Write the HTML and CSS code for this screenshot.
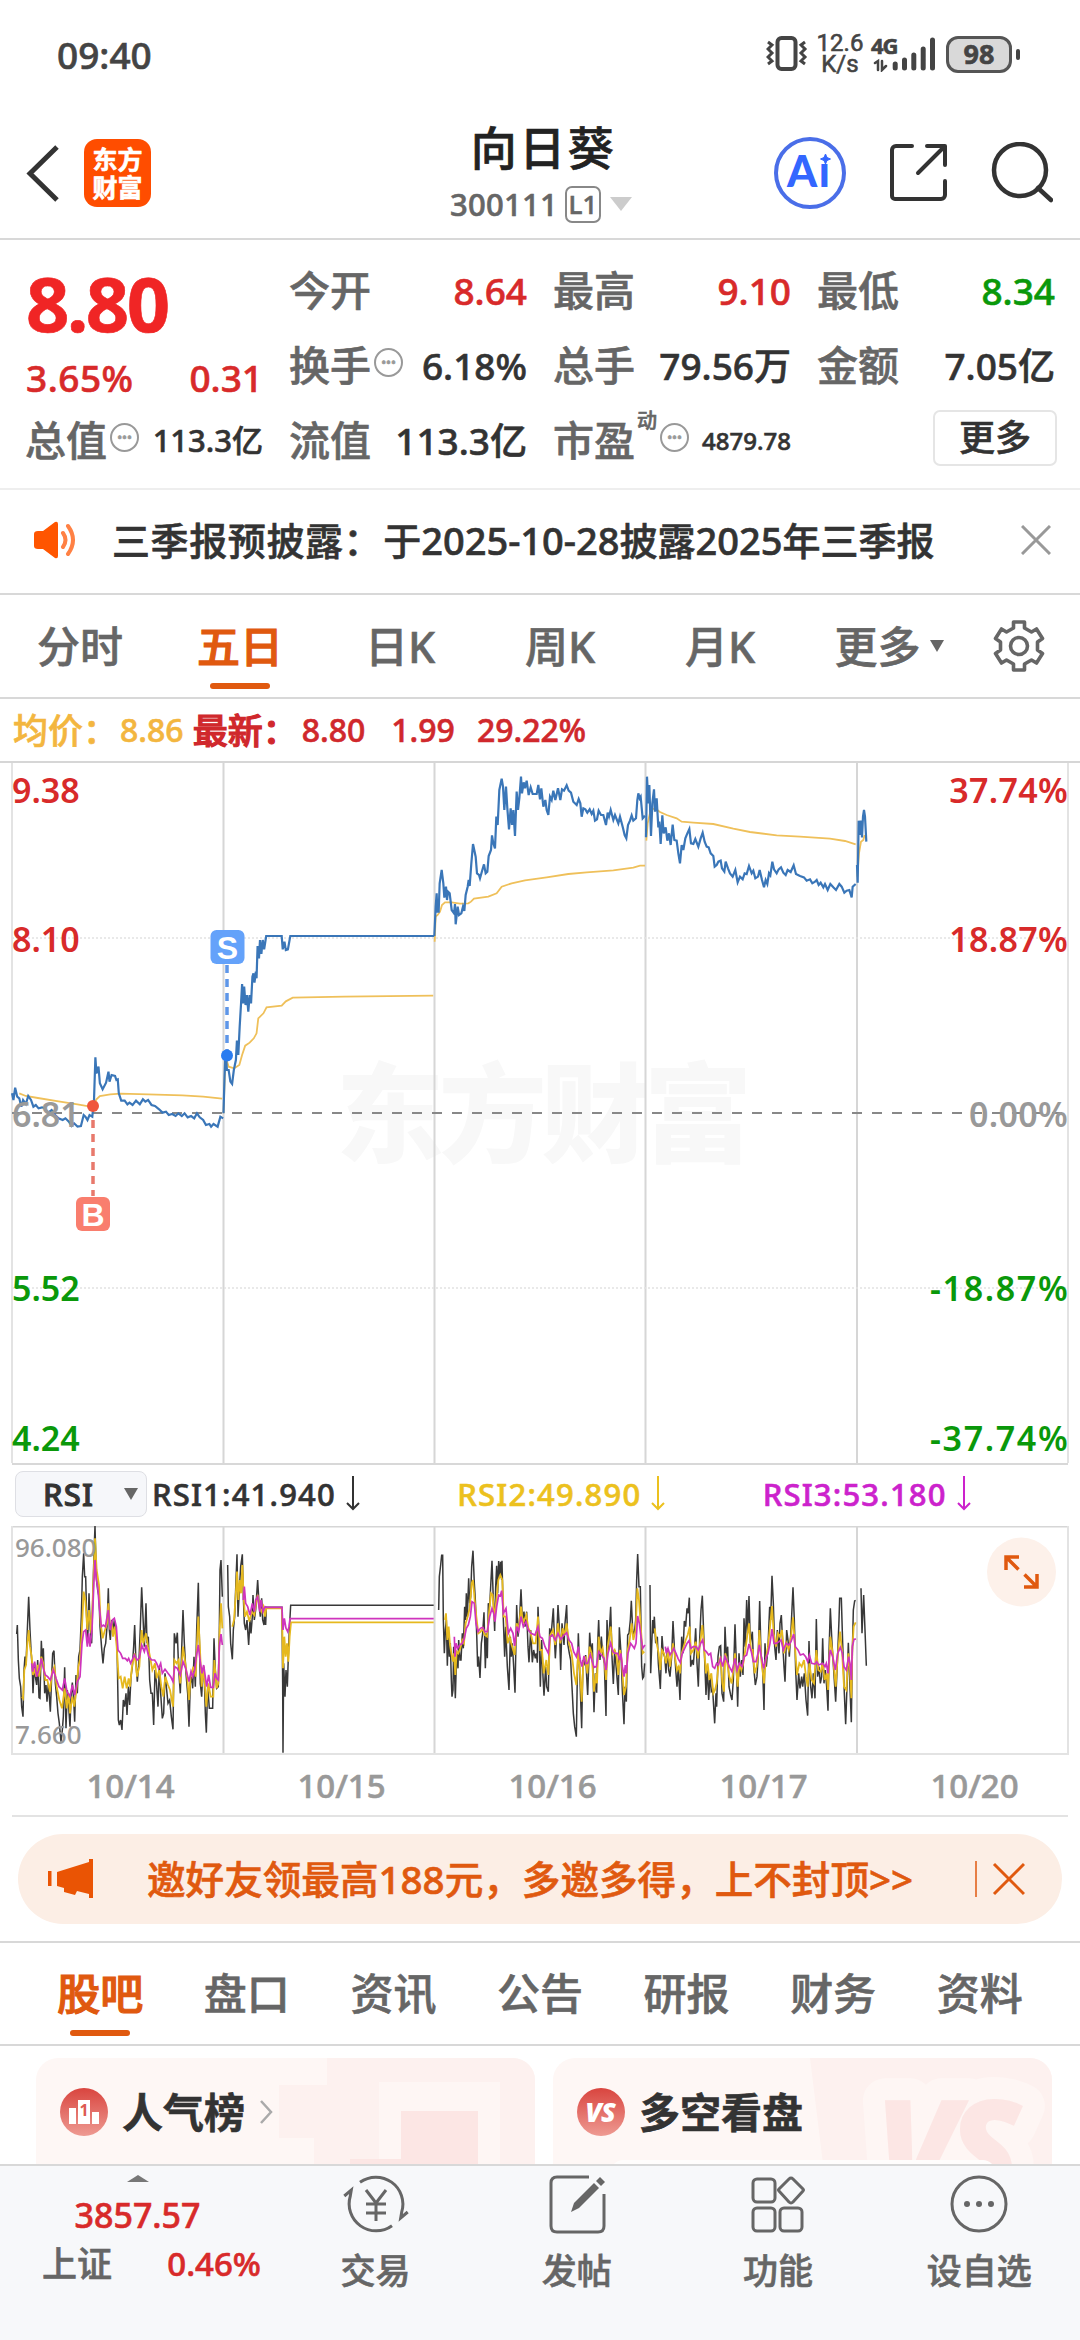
FILE: index.html
```html
<!DOCTYPE html>
<html lang="zh-CN">

<head>
  <meta charset="UTF-8" />
  <meta name="viewport" content="width=device-width, initial-scale=1.0" />
  <title>向日葵 300111</title>
  <link rel="stylesheet" href="styles.css">
</head>

<body>
  <!-- status bar -->
  <div class="status">
    <span class="time">09:40</span>
    <div class="status-right">
      <svg class="vibrate" width="42" height="36" viewBox="0 0 42 36" fill="none" stroke="#444" stroke-width="3">
        <rect x="11.500" y="2" width="18" height="31" rx="4" stroke-width="4" />
        <path d="M2 6l4 3-4 4 4 4-4 4 4 4-4 3M39 6l-4 3 4 4-4 4 4 4-4 4 4 3" />
      </svg>
      <div class="speed"><span>12.6</span><span>K/s</span></div>
      <div class="signal">
        <span>4G</span>
        <svg width="64" height="36" viewBox="0 0 64 36" stroke="#444" stroke-linecap="round" fill="none">
          <path d="M24.200 28v4M33.500 24v8M42.800 19v13M52.200 13v19M61.500 4v28" stroke-width="5" />
          <path d="M4 27l3-2v9M11 25v9l4-4" stroke-width="2.500" />
        </svg>
      </div>
      <div class="battery">98</div>
    </div>
  </div>

  <!-- header -->
  <div class="header">
    <svg class="back" width="36" height="60" viewBox="0 0 36 60" fill="none" stroke="#333" stroke-width="5">
      <path d="M32 4L5 30.500 32 57" />
    </svg>
    <div class="logo"><span>东方</span><span>财富</span></div>
    <div class="title">
      <h1>向日葵</h1>
      <div class="code">300111<span class="level">L1</span><i class="tri"></i></div>
    </div>
    <div class="header-icons">
      <svg width="72" height="72" viewBox="0 0 72 72">
        <circle cx="36" cy="36" r="34" fill="none" stroke="#4a6ee8" stroke-width="4" />
        <text class="ai" x="13" y="50" textLength="43">Ai</text>
        <circle cx="50.500" cy="19.500" r="7.500" fill="#fff" />
        <path d="M51.500 17l1.500 3.500 3.500 1.500-3.500 1.500-1.500 3.500-1.500-3.500-3.500-1.500 3.500-1.500z" fill="#3366ff" stroke="#3366ff" />
      </svg>
      <svg width="60" height="60" viewBox="0 0 60 60" fill="none" stroke="#333" stroke-width="4" stroke-linecap="round" stroke-linejoin="round">
        <path d="M23 3H7a4 4 0 0 0-4 4v46a3 3 0 0 0 3 3h46a4 4 0 0 0 4-4V38" />
        <path d="M38 3h18v19M55 4L29 30" />
      </svg>
      <svg width="62" height="62" viewBox="0 0 62 62" fill="none" stroke="#333" stroke-width="4.500" stroke-linecap="round">
        <circle cx="29" cy="28" r="26" />
        <path d="M47 46l13 12" />
      </svg>
    </div>
  </div>

  <!-- quote -->
  <div class="quote">
    <div class="price">
      <div class="last">8.80</div>
      <div class="change"><span>3.65%</span><span>0.31</span></div>
    </div>
    <div class="cell"><label>今开</label><b class="up">8.64</b></div>
    <div class="cell"><label>最高</label><b class="up">9.10</b></div>
    <div class="cell"><label>最低</label><b class="down">8.34</b></div>
    <div class="cell"><label>换手</label><i class="info">•••</i><b>6.18%</b></div>
    <div class="cell"><label>总手</label><b>79.56万</b></div>
    <div class="cell"><label>金额</label><b>7.05亿</b></div>
    <div class="cell"><label>总值</label><i class="info">•••</i><b class="small">113.3亿</b></div>
    <div class="cell"><label>流值</label><b>113.3亿</b></div>
    <div class="cell"><label>市盈</label><sup>动</sup><i class="info">•••</i><b class="tiny">4879.78</b></div>
    <div class="cell"><button>更多</button></div>
  </div>

  <!-- notice -->
  <div class="notice">
    <svg width="46" height="38" viewBox="0 0 46 38">
      <path d="M1 13q0-3 4-3h5L22 1q3-1 3 2v32q0 3-3 2L10 28H5q-4 0-4-3z" fill="#ff5500" />
      <path d="M30 12q5 7 0 14M35 5q10 14 0 28" fill="none" stroke="#ff8144" stroke-width="4" stroke-linecap="round" />
    </svg>
    <p><span>三季报预披露：</span>于2025-10-28披露2025年三季报</p>
    <svg width="30" height="30" viewBox="0 0 30 30" stroke="#999" stroke-width="3">
      <path d="M1 1l28 28M29 1L1 29" />
    </svg>
  </div>

  <!-- period tabs -->
  <div class="tabs">
    <span>分时</span>
    <span class="active">五日</span>
    <span>日K</span>
    <span>周K</span>
    <span>月K</span>
    <span class="more">更多<i class="tri"></i></span>
    <svg width="52" height="52" viewBox="0 0 52 52" fill="none" stroke="#666" stroke-width="3.600">
      <path d="M20.500 2h11v6l7 4 5-3 6 9.500-5 3.500v8l5 3.500-6 9.500-5-3-7 4v6h-11v-6l-7-4-5 3-6-9.500 5-3.500v-8l-5-3.500 6-9.500 5 3 7-4z" stroke-linejoin="round" />
      <circle cx="26" cy="26" r="8.500" />
    </svg>
  </div>

  <div class="legend">
    <span class="avg">均价：</span><span class="avg v1">8.86</span>
    <span class="red bold">最新：</span><span class="red v1">8.80</span>
    <span class="red v2">1.99</span>
    <span class="red">29.22%</span>
  </div>

  <!-- five day chart -->
  <svg class="chart" width="1080" height="702" viewBox="0 761 1080 702">
    <text class="mark" x="336" y="1154" textLength="416">东方财富</text>
    <path class="grid" d="M0 762H1080M223.500 763V1463M434.500 763V1463M645.500 763V1463M857 763V1463" />
    <path class="edge" d="M12 763V1463M1068 763V1463" />
    <path class="faint" d="M12 938H1068M12 1288H1068" />
    <path class="zero" d="M12 1113H1068" />

    <g class="avg-line" transform="translate(0 760) scale(.34437 .33333)">
      <polyline points="56,1000 75,1008 110,1014 170,1024 225,1033 262,1040 272,1035 280,1018 290,1008 320,1003 350,1001 430,1003 530,1006 590,1010 645,1016" />
      <polyline points="649,1060 653,940 658,900 664,920 680,925 695,915 703,885 712,857 725,848 737,835 745,820 750,775 765,760 774,742 818,737 830,724 850,713 1000,710 1258,707" />
    </g>
    <g class="avg-line" transform="translate(400 750) scale(.33333)">
      <polyline points="104,575 107,500 113,495 120,485 126,465 135,457 155,457 180,461 205,460 213,455 222,446 265,440 290,430 305,410 335,400 375,391 440,382 505,372 560,367 640,361 700,353 720,347 735,347" />
      <polyline points="739,272 743,220 752,180 765,175 780,186 800,195 830,205 845,215 880,218 940,222 1000,236 1050,246 1130,256 1200,260 1290,266 1335,273 1367,283" />
      <polyline points="1372,380 1377,310 1383,275 1390,270 1394,255" />
    </g>
    <g class="price-line" transform="translate(0 760) scale(.34437 .33333)">
      <polyline points="35,1000 39,1020 44,983 50,1010 56,1015 62,1040 67,1020 75,1032 82,1008 90,1020 97,1040 104,1035 112,1045 122,1042 130,1045 140,1058 150,1050 160,1065 170,1075 182,1080 190,1075 200,1085 208,1098 215,1090 225,1100 235,1098 243,1065 248,1070 254,1080 260,1065 268,1070 273,1020 277,892 280,940 286,920 290,970 298,988 308,968 315,935 318,965 324,945 334,948 338,960 342,958 345,1000 352,1022 362,1022 370,1033 376,1028 385,1035 395,1022 406,1033 415,1018 422,1025 430,1020 440,1035 450,1038 462,1048 472,1058 482,1055 490,1065 500,1062 510,1068 518,1060 528,1068 536,1060 545,1072 555,1068 564,1075 572,1060 580,1072 590,1080 598,1095 608,1092 613,1100 620,1092 632,1100 640,1070 648,1075" />
      <polyline points="649,1060 652,950 655,870 659,930 664,930 669,965 674,972 679,930 685,900 688,842 692,885 696,800 700,730 703,672 706,730 709,680 713,735 717,705 721,755 725,705 729,730 733,650 736,640 739,668 743,635 745,655 748,558 752,595 755,540 759,582 763,540 767,568 773,528 818,528 821,568 826,545 830,570 836,568 843,528 1261,528" />
    </g>
    <g class="price-line" transform="translate(400 750) scale(.33333)">
      <polyline points="103,558 107,470 110,430 112,485 116,485 119,400 125,360 130,400 133,443 138,410 141,450 144,425 149,430 155,480 162,490 165,462 167,523 173,470 177,495 184,490 189,470 193,483 197,435 203,410 206,390 209,408 214,340 219,282 227,320 231,370 237,375 240,385 247,360 252,343 257,370 262,365 266,318 273,300 276,256 280,280 285,295 289,200 293,225 298,120 305,86 309,110 313,180 318,110 322,175 327,238 332,175 336,225 340,180 345,258 350,125 354,180 358,145 363,80 366,130 371,97 375,115 380,92 386,135 392,112 398,132 410,132 415,105 420,148 424,115 430,170 436,150 440,180 445,195 450,140 455,150 460,122 466,150 474,115 481,150 486,118 492,122 500,106 506,122 513,128 520,155 530,165 536,147 541,160 545,200 550,175 556,178 562,188 569,178 575,192 580,182 585,212 591,208 596,182 603,195 610,195 618,225 623,188 627,200 632,180 640,210 645,195 655,220 660,200 668,230 674,255 679,265 684,225 690,212 695,196 700,212 708,205 712,150 715,130 719,145 722,140 728,205 735,197" />
      <polyline points="738,262 741,80 745,160 748,105 753,258 757,160 762,118 765,185 770,145 775,232 778,215 782,282 787,196 791,250 797,232 802,272 807,250 812,285 818,224 823,270 830,272 835,310 840,340 845,285 850,300 856,265 862,250 868,237 873,280 880,282 886,267 895,290 902,265 908,248 914,275 920,290 926,292 932,310 940,318 944,350 950,345 955,335 962,332 966,355 973,365 977,335 984,355 990,370 998,380 1006,360 1013,397 1020,380 1028,388 1034,370 1040,372 1047,348 1055,370 1060,362 1066,385 1074,380 1079,360 1086,390 1092,412 1097,390 1102,402 1107,370 1111,376 1117,335 1122,358 1130,370 1136,358 1143,352 1150,368 1157,375 1163,360 1172,366 1181,346 1188,372 1200,378 1212,382 1220,392 1230,388 1237,400 1245,395 1250,390 1256,405 1262,398 1270,412 1275,402 1283,420 1291,402 1300,412 1308,420 1318,402 1325,410 1333,428 1340,422 1348,420 1355,442 1358,410 1367,402" />
      <polyline points="1371,345 1373,398 1376,212 1379,255 1383,212 1386,262 1389,200 1392,180 1395,200 1399,275" />
    </g>

    <!-- axis labels -->
    <g class="axis">
      <text class="up" x="12" y="803">9.38</text>
      <text class="up" x="12" y="952">8.10</text>
      <text class="flat" x="12" y="1127">6.81</text>
      <text class="down" x="12" y="1301">5.52</text>
      <text class="down" x="12" y="1451">4.24</text>
    </g>
    <g class="axis right">
      <text class="up" x="1068" y="803">37.74%</text>
      <text class="up" x="1068" y="952">18.87%</text>
      <text class="flat" x="1068" y="1127">0.00%</text>
      <text class="down" x="1068" y="1301" textLength="138">-18.87%</text>
      <text class="down" x="1068" y="1451" textLength="138">-37.74%</text>
    </g>

    <!-- sell / buy marks -->
    <path d="M227 965V1050" stroke="#5e96e8" stroke-width="3.500" stroke-dasharray="8 6" />
    <circle cx="227" cy="1055.500" r="6" fill="#2a7cf0" />
    <rect x="210.500" y="930" width="34" height="34" rx="6" fill="#64a2fa" />
    <text class="flag" x="227.500" y="959">S</text>
    <path d="M93 1120V1196" stroke="#e8796c" stroke-width="3.500" stroke-dasharray="8 6" />
    <circle cx="93" cy="1106" r="6" fill="#f0553c" />
    <rect x="76" y="1197" width="34" height="34" rx="6" fill="#f97e6e" />
    <text class="flag" x="93" y="1226">B</text>
  </svg>

  <!-- RSI -->
  <div class="rsi-head">
    <div class="picker">RSI<i class="tri"></i></div>
    <div class="r1">RSI1:41.940
      <svg width="14" height="36" viewBox="0 0 14 36"><path d="M7 0V32M1 27l6 6 6-6" /></svg>
    </div>
    <div class="r2">RSI2:49.890
      <svg width="14" height="36" viewBox="0 0 14 36"><path d="M7 0V32M1 27l6 6 6-6" /></svg>
    </div>
    <div class="r3">RSI3:53.180
      <svg width="14" height="36" viewBox="0 0 14 36"><path d="M7 0V32M1 27l6 6 6-6" /></svg>
    </div>
  </div>
  <svg class="chart" width="1080" height="229" viewBox="0 1526 1080 229">
    <path class="grid" d="M12 1526.500H1068M223.500 1526V1754M434.500 1526V1754M645.500 1526V1754M857 1526V1754" />
    <path class="edge" d="M12 1526V1754H1068V1526" />
    <g class="k-line">
      <g transform="translate(0 1430) scale(.33333)">
        <polyline points="50,612 52,585 55,690 58,745 62,770 65,830 69,860 72,720 75,680 78,705 82,600 86,500 90,600 93,660 97,720 99,790 103,700 106,740 110,765 113,690 117,803 120,805 124,632 127,700 130,655 134,790 138,765 141,815 145,760 148,800 151,845 155,740 158,670 162,662 166,760 170,800 174,850 178,880 183,935 187,900 190,860 194,712 198,895 202,780 206,830 210,890 213,800 217,758 221,810 224,875 228,735 232,790 236,680 240,660 244,560 247,440 251,370 254,440 257,440 260,560 263,640 267,490 271,600 275,640 279,480 282,370 285,288 289,440 293,480 297,500 300,590 305,655 309,700 313,655 317,640 321,590 325,475 328,600 331,630 335,570 339,600 343,570 347,610 351,640 355,870 358,885 362,870 366,900 370,810 374,830 378,790 381,855 385,770 389,825 393,740 397,710 401,650 404,585 408,700 412,755 417,690 421,590 425,472 429,560 433,650 438,520 441,640 445,620 449,750 453,790 457,790 461,885 465,720 469,755 474,830 478,710 482,790 487,865 491,850 495,730 499,770 504,820 509,810 514,860 519,898 523,610 528,640 532,608 536,720 541,790 545,660 549,540 553,640 558,730 563,790 567,890 571,760 575,740 578,775 582,680 586,770 590,600 595,458 598,620 601,760 605,800 609,720 612,710 616,850 619,908 623,770 628,835 638,835 642,625 646,720 650,775 655,770 658,600 660,420 663,390 667,500" />
        <polyline points="683,405 685,530 689,560 692,640 697,688 700,600 704,560 708,450 711,373 714,560 718,480 722,410 727,373 730,500 733,580 737,600 741,570 746,645 750,570 753,610 757,560 759,495 763,570 767,540 773,450 777,520 781,560 785,505 788,570 792,585 795,540 797,585 799,532 846,532 848,760 849,968 851,700 855,800 858,720 862,770 865,680 868,600 872,526 1301,526" />
      </g>
      <g transform="translate(425 1520) scale(.33333)">
        <polyline points="41,270 43,170 47,135 50,106 53,106 55,300 58,400 61,330 64,300 67,437 70,330 73,410 76,370 79,480 81,530 84,510 86,380 91,535 95,400 99,445 101,360 105,420 108,420 112,340 115,385 119,260 122,300 124,220 127,290 131,175 134,250 137,230 140,140 144,92 148,190 151,240 155,340 158,440 161,410 165,474 169,370 173,340 177,277 181,445 184,340 187,415 190,250 194,260 198,180 201,122 205,240 209,333 212,200 215,137 218,220 221,123 225,170 227,125 230,180 231,122 235,300 239,410 242,320 247,440 252,510 256,350 259,410 262,370 266,440 270,518 275,255 279,350 284,290 288,208 292,300 297,275 300,320 305,275 309,380 312,427 317,330 322,427 326,390 331,415 334,400 337,428 339,260 343,370 346,500 350,360 354,470 357,527 362,440 365,500 370,515 374,325 378,350 385,265 388,350 391,415 396,330 399,255 403,320 407,450 411,310 414,340 417,375 420,310 425,255 428,370 433,400 437,420 441,500 445,580 449,620 454,650 457,470 460,340 464,450 467,540 470,625 474,420 478,430 482,405 485,470 488,525 491,440 494,338 498,400 502,370 507,577 511,460 515,518 518,370 521,300 525,420 529,350 533,400 538,430 543,588 546,300 550,390 557,260 561,410 565,492 569,390 575,460 580,525 583,322 588,400 592,510 597,613 600,500 604,545 608,345 612,340 616,300 619,242 623,330 627,350 632,300 635,180 638,102 642,200 646,200 650,440 653,475 656,470 659,430" />
      </g>
      <g transform="translate(640 1520) scale(.33333)">
        <polyline points="30,195 32,460 38,300 40,340 43,290 47,370 52,350 55,430 61,507 66,348 70,400 74,410 78,460 82,385 86,450 90,470 95,410 99,303 104,400 108,460 111,500 115,440 120,540 125,350 129,400 133,303 137,320 141,265 144,280 148,233 152,440 157,420 160,435 164,380 167,325 171,430 175,500 179,360 183,270 187,227 191,340 194,420 198,525 202,440 206,540 210,465 214,515 218,510 221,560 224,610 228,520 230,560 234,410 238,380 242,377 246,520 251,545 255,320 259,410 263,380 267,500 272,525 276,540 280,480 285,313 289,430 293,560 297,400 301,470 305,420 309,465 312,295 316,380 320,240 323,340 327,228 331,370 337,335 341,440 346,495 351,470 355,400 359,243 363,400 368,450 372,570 375,370 379,440 384,380 389,260 392,300 396,167 400,250 404,380 408,420 412,330 417,400 420,310 424,285 428,370 432,440 435,485 440,330 444,360 448,410 453,330 459,202 463,300 467,450 471,540 476,460 480,505 485,470 488,500 493,460 498,540 503,587 507,363 511,490 516,535 520,460 525,535 529,297 533,470 537,440 541,490 545,470 548,355 552,490 556,450 560,500 564,572 567,400 571,265 576,370 581,450 587,545 592,430 597,300 599,235 604,235 608,370 613,520 617,613 621,500 625,368 629,480 634,607 637,400 640,270 644,243 647,241" />
        <polyline points="663,205 666,340 671,225 675,330 679,437" />
      </g>
    </g>
    <g class="d-line">
      <g transform="translate(0 1430) scale(.33333)">
        <polyline points="66,800 69,805 73,720 78,705 82,640 86,600 90,650 95,680 99,735 104,715 108,740 113,705 118,740 124,680 130,700 136,750 142,750 150,785 156,725 163,710 170,770 178,810 186,835 194,775 200,835 206,790 210,850 217,800 223,830 230,770 235,710 240,690 245,610 251,485 256,510 262,600 267,540 274,610 280,460 285,325 290,420 297,465 302,580 308,625 315,600 321,580 325,520 330,590 335,580 339,620 344,590 350,650 356,745 362,740 368,775 374,740 380,775 386,745 390,770 396,710 404,670 411,740 418,710 425,600 430,640 438,610 444,650 450,680 457,720 465,700 470,745 478,720 484,770 490,800 496,740 504,765 510,780 519,830 523,690 530,700 536,690 541,760 549,650 556,700 562,745 567,810 572,740 580,710 587,740 591,640 595,560 600,660 605,770 611,710 619,830 625,760 632,800 640,800 643,690 650,775 655,760 659,600 663,520 667,595" />
        <polyline points="697,590 702,570 707,500 711,425 715,510 719,450 723,490 727,405 731,500 735,560 741,545 748,575 755,545 763,555 768,520 773,495 778,530 784,545 790,530 795,560 799,535 846,535 849,715 853,620 857,680 861,640 865,695 869,620 873,577 1301,577" />
      </g>
      <g transform="translate(425 1520) scale(.33333)">
        <polyline points="60,300 63,280 67,360 71,320 75,375 79,400 84,425 87,400 91,465 95,395 100,400 106,385 112,360 117,370 122,310 128,290 134,265 140,190 144,180 149,240 154,290 160,340 167,335 173,325 179,345 186,350 192,280 198,220 203,225 208,300 214,240 220,180 226,165 232,180 236,290 242,290 248,370 254,350 260,375 269,405 275,310 281,330 288,260 294,310 304,285 310,325 316,335 324,370 332,370 339,290 345,390 351,390 356,460 364,420 370,465 376,345 384,330 391,375 399,310 406,370 413,325 418,345 425,310 432,370 440,400 447,460 454,495 460,390 466,470 470,545 475,425 481,410 487,460 494,380 500,400 507,515 513,460 516,490 521,350 527,400 533,385 539,430 543,480 548,380 557,320 563,400 569,390 575,410 580,465 585,390 590,420 597,525 603,500 608,390 614,360 620,310 625,360 632,330 637,205 642,240 648,330 653,400 658,395" />
      </g>
      <g transform="translate(640 1520) scale(.33333)">
        <polyline points="44,325 50,370 56,400 61,450 66,390 72,400 78,430 84,395 90,440 95,400 99,370 105,410 111,450 116,440 120,460 125,400 131,380 137,360 143,345 149,320 153,400 160,390 167,365 174,415 181,365 187,315 192,380 198,460 203,430 208,480 214,460 220,520 225,510 230,490 236,430 242,410 247,490 252,515 256,400 262,430 268,470 275,490 280,450 285,400 293,500 298,430 304,450 310,430 316,390 322,345 327,310 333,390 338,390 344,460 350,440 355,400 358,330 364,420 372,490 377,420 384,380 390,320 396,258 401,340 408,380 414,340 420,350 426,330 432,400 439,370 446,390 453,350 459,292 465,380 471,465 478,430 485,440 492,420 498,470 503,500 508,430 515,480 522,490 529,390 535,450 542,455 548,430 554,480 560,460 564,510 568,420 571,350 578,400 587,500 593,410 600,335 606,390 612,500 619,510 625,400 630,450 634,535 637,390 641,320 647,307" />
      </g>
    </g>
    <g class="j-line">
      <g transform="translate(0 1430) scale(.33333)">
        <polyline points="95,700 98,725 104,695 110,740 118,715 124,685 130,715 136,735 143,740 151,750 160,720 168,745 177,770 187,780 194,745 201,785 210,800 217,765 224,795 232,755 240,740 246,640 251,605 257,600 262,650 266,610 270,650 276,600 282,450 285,390 289,450 293,470 298,530 304,590 310,585 316,590 325,540 331,600 337,570 343,565 349,590 354,660 362,670 368,685 376,685 382,692 386,685 392,700 403,675 411,690 418,685 425,645 433,665 438,645 446,680 455,690 464,690 470,700 476,715 482,700 487,730 495,718 504,730 512,740 519,755 524,710 532,715 541,735 549,695 557,715 567,755 573,725 578,740 584,720 589,680 595,645 600,690 606,730 611,705 620,770 626,735 632,772 640,772 645,730 650,745 655,750 658,650 663,612 667,645" />
        <polyline points="730,510 733,470 737,520 743,530 750,555 757,520 763,545 767,510 773,500 779,545 783,510 789,545 795,530 799,532 846,532 849,600 853,565 858,595 863,605 867,590 870,566 1301,566" />
      </g>
      <g transform="translate(425 1520) scale(.33333)">
        <polyline points="88,350 90,410 93,370 98,385 104,375 112,370 118,355 124,325 130,315 136,290 141,245 148,250 153,310 159,335 166,325 173,322 180,335 187,335 194,290 201,265 206,280 210,305 215,260 221,225 226,228 230,212 235,280 243,265 250,340 257,325 264,340 269,378 275,320 281,335 288,290 295,320 303,305 310,330 318,340 330,345 339,320 345,350 352,355 360,380 370,400 375,350 382,345 391,360 399,340 407,358 417,345 425,338 432,360 440,370 446,395 454,410 460,380 466,420 471,440 477,408 482,430 488,430 496,405 507,442 514,440 521,395 529,405 537,415 543,450 549,400 557,370 564,395 570,400 578,400 584,420 588,400 592,440 597,470 601,435 604,460 609,400 617,370 628,385 633,370 638,288 643,310 648,350 653,385 660,375" />
      </g>
      <g transform="translate(640 1520) scale(.33333)">
        <polyline points="76,380 79,400 84,385 90,405 96,395 101,385 108,400 114,415 121,428 127,400 134,385 141,370 147,362 153,385 160,380 168,380 175,390 182,370 188,360 193,390 199,395 206,405 212,400 218,440 224,445 230,430 235,435 242,415 248,440 255,410 262,425 268,440 276,455 285,415 291,450 298,430 306,440 313,410 320,405 327,372 334,395 340,425 348,425 354,400 358,375 364,410 371,445 378,415 384,400 390,370 396,327 402,370 409,370 417,365 423,360 430,390 438,370 446,375 453,365 461,342 466,380 474,390 481,405 490,402 497,410 503,425 508,405 515,430 525,432 530,425 536,435 548,430 555,440 559,430 564,460 568,410 571,390 578,410 586,450 593,400 601,382 607,400 612,440 619,450 626,410 630,430 634,480 637,380 642,358 648,357" />
      </g>
    </g>
    <text class="range" x="15" y="1557">96.080</text>
    <text class="range" x="15" y="1744">7.660</text>
    <circle cx="1021.500" cy="1572" r="34.500" fill="#fdf1ea" />
    <path d="M1006 1570v-13h13M1006.500 1557.500l12 12M1037 1574v13h-13M1036.500 1586.500l-12-12" fill="none" stroke="#e0590f" stroke-width="3.500" />
  </svg>
  <div class="dates">
    <span>10/14</span><span>10/15</span><span>10/16</span><span>10/17</span><span>10/20</span>
  </div>

  <!-- promo banner -->
  <div class="banner">
    <svg width="46" height="40" viewBox="0 0 46 40" fill="#ea5404">
      <path d="M0 12h3.500v15H0zM9 13L41 3V0h4v39h-4v-4l-12-3-2 4-11-3v-4l-7-2z" />
    </svg>
    <p>邀好友领最高188元，多邀多得，上不封顶&gt;&gt;</p>
    <svg width="50" height="36" viewBox="0 0 50 36" fill="none" stroke="#e0590f" stroke-width="3">
      <path d="M1 0v36" stroke-width="1.500" />
      <path d="M19 3l30 30M49 3L19 33" />
    </svg>
  </div>

  <!-- section tabs -->
  <div class="sections">
    <span class="active">股吧</span><span>盘口</span><span>资讯</span><span>公告</span><span>研报</span><span>财务</span><span>资料</span>
  </div>

  <div class="cards">
    <div class="card">
      <svg class="card-bg" width="500" height="106" viewBox="0 0 500 106">
        <path d="M291 0H500V106H278V80H243V27H291z" fill="#fdf1ef" />
        <path d="M343 24H464V106H343z" fill="#fef6f4" />
        <path d="M365 53H442V106H314V101H365z" fill="#fce6e4" />
      </svg>
      <svg width="48" height="48" viewBox="0 0 48 48">
        <linearGradient id="red" x1="0" y1="0" x2="0" y2="1">
          <stop offset="0" stop-color="#d9453f" />
          <stop offset="1" stop-color="#ee9a92" />
        </linearGradient>
        <circle cx="24" cy="24" r="24" fill="url(#red)" />
        <path d="M9 20h7v16H9zM18 12h12v24H18zM32 24h7v12h-7z" fill="#fff" />
        <text class="no1" x="24" y="28">1</text>
      </svg>
      <h3>人气榜</h3>
      <svg width="14" height="24" viewBox="0 0 14 24" fill="none" stroke="#aaa" stroke-width="2.500"><path d="M2 1l10 11L2 23" /></svg>
    </div>
    <div class="card">
      <svg class="card-bg" width="500" height="106" viewBox="0 0 500 106">
        <path d="M257 0H500V106H270z" fill="#fdf1ef" />
        <text class="vs-bg" x="322" y="140">VS</text>
        <rect x="58" y="102" width="384" height="30" rx="12" fill="#fffdfc" />
      </svg>
      <svg width="48" height="48" viewBox="0 0 48 48">
        <circle cx="24" cy="24" r="24" fill="url(#red)" />
        <text class="vs" x="23" y="34">VS</text>
      </svg>
      <h3>多空看盘</h3>
    </div>
  </div>

  <!-- bottom bar -->
  <div class="bottom">
    <div class="index">
      <i class="tri"></i>
      <div class="points">3857.57</div>
      <div class="line"><span>上证</span><b>0.46%</b></div>
    </div>
    <div class="item">
      <svg width="66" height="60" viewBox="0 0 66 60" fill="none" stroke="#666" stroke-width="3">
        <path d="M17 8.300A27 27 0 0 1 58.700 38l-1 6 7-6M49 51.700A27 27 0 0 1 7.300 22l1-6-7 6" />
        <path d="M23 16l10 13 10-13M33 29v18M23 30h20M23 39h20" />
      </svg>
      <span>交易</span>
    </div>
    <div class="item">
      <svg width="60" height="60" viewBox="0 0 60 60" fill="none" stroke="#666" stroke-width="3">
        <path d="M42 3H10q-6 0-6 6v43q0 6 6 6h41q6 0 6-6V20" />
        <path d="M24 38l3-9L47 9l5 5-20 20z" fill="#666" stroke="none" />
        <path d="M49 7l4-4 5 5-4 4z" fill="#666" stroke="none" />
      </svg>
      <span>发帖</span>
    </div>
    <div class="item">
      <svg width="56" height="60" viewBox="0 0 56 60" fill="none" stroke="#666" stroke-width="3">
        <rect x="3" y="5" width="22" height="23" rx="4" />
        <rect x="3" y="34" width="22" height="23" rx="4" />
        <rect x="30" y="34" width="22" height="23" rx="4" />
        <path d="M41 4q1 0 2 1l10 10q1 1 0 2L43 28q-2 2-4 0L29 17q-1-1 0-2L39 5q1-1 2-1z" />
      </svg>
      <span>功能</span>
    </div>
    <div class="item">
      <svg width="60" height="60" viewBox="0 0 60 60" fill="none" stroke="#666" stroke-width="3">
        <circle cx="30" cy="30" r="27" />
        <g fill="#666" stroke="none"><circle cx="18" cy="30" r="3" /><circle cx="30" cy="30" r="3" /><circle cx="42" cy="30" r="3" /></g>
      </svg>
      <span>设自选</span>
    </div>
  </div>
</body>

</html>
```
FILE: styles.css
```css
* {
  box-sizing: border-box;
}

body {
  margin: 0;
  width: 1080px;
  height: 2340px;
  overflow: hidden;
  display: flex;
  flex-direction: column;
  background-color: #fff;
  color: #333;
  font-family: "Noto Sans", "Noto Sans CJK SC", sans-serif;
  font-weight: 500;
  line-height: 1;
  white-space: nowrap;
  -webkit-text-stroke: 0.6px;
}

body > * {
  flex-shrink: 0;
}

h1, h3, p {
  margin: 0;
}

svg {
  display: block;
  flex-shrink: 0;
}

i {
  font-style: normal;
}

b {
  font-weight: 500;
}

.up {
  color: #d82a2a;
  fill: #d82a2a;
}

.down {
  color: #0a980a;
  fill: #0a980a;
}

.flat {
  fill: #999;
}

.tri {
  display: inline-block;
  border-left: 7px solid transparent;
  border-right: 7px solid transparent;
  border-top: 12px solid #666;
}

/* status bar */
.status {
  height: 108px;
  padding: 0 62px 0 57px;
  display: flex;
  justify-content: space-between;
  align-items: center;
  color: #444;
}

.time {
  font-size: 37px;
}

.status-right {
  display: flex;
  align-items: center;
}

.speed {
  width: 42px;
  margin-left: 11px;
  display: flex;
  flex-direction: column;
  align-items: center;
  font: 24px/21px Roboto, sans-serif;
}

.signal {
  width: 64px;
  height: 36px;
  margin-left: 10px;
  position: relative;
}

.signal span {
  position: absolute;
  left: 0;
  top: -2px;
  font-size: 22px;
  font-weight: 700;
  letter-spacing: -1px;
}

.battery {
  position: relative;
  width: 66px;
  height: 37px;
  margin: 0 6px 0 11px;
  border: 3px solid #555;
  border-radius: 12px;
  background-color: #d9d9d9;
  text-align: center;
  font-size: 27px;
  font-weight: 700;
  line-height: 30px;
}

.battery::after {
  content: "";
  position: absolute;
  right: -11px;
  top: 10px;
  width: 4px;
  height: 11px;
  border-radius: 2px;
  background-color: #444;
}

/* header */
.header {
  height: 132px;
  padding: 0 27px 0 25px;
  display: flex;
  align-items: center;
  border-bottom: 2px solid #d8d8d8;
}

.logo {
  width: 67px;
  height: 68px;
  margin-left: 23px;
  border-radius: 13px;
  background-color: #ff4d00;
  color: #fff;
  font-size: 25px;
  font-weight: 700;
  display: flex;
  flex-direction: column;
  justify-content: center;
  align-items: center;
  gap: 3px;
}

.title {
  flex: 1;
  display: flex;
  flex-direction: column;
  align-items: center;
  padding-left: 157px;
}

.title h1 {
  font-size: 46px;
  font-weight: 500;
  letter-spacing: 2.5px;
  padding-left: 5px;
  color: #222;
}

.code {
  display: flex;
  align-items: center;
  gap: 7px;
  margin-top: 16px;
  font-size: 31px;
  letter-spacing: 0.3px;
  color: #666;
}

.level {
  width: 36px;
  height: 37px;
  border: 2px solid #888;
  border-radius: 7px;
  font-size: 26px;
  line-height: 32px;
  text-align: center;
}

.code .tri {
  border-width: 14px 11px 0;
  border-top-color: #ccc;
  margin-left: 2px;
}

.header-icons {
  display: flex;
  align-items: center;
  gap: 43px;
}

.header-icons svg:last-child {
  margin-left: -1px;
}

.ai {
  font: 900 43px Lato, sans-serif;
  fill: #3366ff;
}

/* quote */
.quote {
  height: 250px;
  padding: 13px 25px 11px 26px;
  display: grid;
  grid-template-columns: repeat(4, 1fr);
  grid-template-rows: repeat(3, 75px);
  column-gap: 27px;
  border-bottom: 2px solid #eee;
}

.price {
  grid-row: span 2;
  color: #d82a2a;
}

.last {
  margin-top: 12px;
  font-size: 76px;
  font-weight: 700;
  letter-spacing: -2.5px;
  color: #f02525;
}

.change {
  display: flex;
  justify-content: space-between;
  margin-top: 18px;
  font-size: 37px;
}

.change span:first-child {
  letter-spacing: 0.5px;
}

.cell {
  display: flex;
  align-items: center;
  font-size: 37px;
}

.cell label {
  font-size: 41px;
  margin-left: -1px;
  color: #666;
}

.cell b {
  margin-left: auto;
}

.cell .small {
  font-size: 31px;
}

.cell .tiny {
  font-size: 24px;
}

.info {
  width: 29px;
  height: 29px;
  margin: -6px 0 0 3px;
  border: 2px solid #999;
  border-radius: 50%;
  color: #999;
  font-size: 13px;
  line-height: 25px;
  text-align: center;
}

.cell sup {
  align-self: flex-start;
  margin: 8px 0 0 2px;
  font-size: 20px;
  color: #666;
}

.cell button {
  width: 124px;
  height: 56px;
  margin: 0 -2px 5px auto;
  border: 2px solid #e5e5e5;
  border-radius: 7px;
  background-color: #fff;
  color: #333;
  font: inherit;
  font-size: 36px;
}

/* notice */
.notice {
  height: 105px;
  padding: 0 29px 3px 33px;
  display: flex;
  align-items: center;
  border-bottom: 2px solid #d8d8d8;
}

.notice p {
  flex: 1;
  padding-left: 33px;
  font-size: 38px;
}

.notice p span {
  margin-right: 1px;
  letter-spacing: 0.6px;
}

/* period tabs */
.tabs {
  height: 104px;
  display: grid;
  grid-template-columns: repeat(6, 160px) 1fr;
  place-items: center;
  border-bottom: 2px solid #d8d8d8;
  font-size: 43px;
  color: #666;
}

.tabs svg {
  margin-right: 3px;
}

.active {
  position: relative;
  color: #e0590f;
  font-weight: 500;
  -webkit-text-stroke: 1.2px;
}

.active::after {
  content: "";
  position: absolute;
  left: 50%;
  bottom: -21px;
  width: 60px;
  height: 6px;
  margin-left: -30px;
  border-radius: 3px;
  background-color: #e0590f;
}

.more {
  display: flex;
  align-items: center;
  gap: 9px;
  padding-left: 18px;
}

.legend {
  height: 62px;
  padding-left: 13px;
  display: flex;
  align-items: center;
  font-size: 32px;
}

.legend .avg {
  color: #f3b63f;
}

.legend .red {
  color: #d0282c;
}

.legend .avg:first-child,
.legend .bold {
  font-size: 35px;
}

.legend .avg:first-child {
  margin-right: 2px;
}

.legend .bold {
  margin-right: 4px;
  -webkit-text-stroke: 1.2px;
}

.legend .v1 {
  margin-right: 9px;
}

.legend .red.v1 {
  margin-right: 26px;
}

.legend .v2 {
  margin-right: 22px;
}

/* charts */
.grid {
  stroke: #d6d6d6;
  stroke-width: 2;
  fill: none;
}

.edge {
  stroke: #e3e3e3;
  stroke-width: 2;
  fill: none;
}

.faint {
  stroke: #e2e2e2;
  stroke-width: 1.5;
  stroke-dasharray: 2 2;
}

.zero {
  stroke: #888;
  stroke-width: 2;
  stroke-dasharray: 10 10;
}

.mark {
  font-family: "Noto Sans CJK SC", sans-serif;
  font-size: 108px;
  font-weight: 900;
  fill: #f8f8f8;
}

.chart polyline {
  fill: none;
  vector-effect: non-scaling-stroke;
}

.avg-line {
  stroke: #efc05a;
  stroke-width: 1.8;
}

.price-line {
  stroke: #3a76b8;
  stroke-width: 2.2;
}

.k-line {
  stroke: #383838;
  stroke-width: 1.5;
}

.d-line {
  stroke: #e6b91e;
  stroke-width: 1.8;
}

.j-line {
  stroke: #cf34bd;
  stroke-width: 1.7;
}

.axis {
  font-size: 34px;
  font-weight: 600;
}

.right {
  text-anchor: end;
  letter-spacing: 0.3px;
}

.flag {
  fill: #fff;
  font: 700 32px "Liberation Sans", sans-serif;
  text-anchor: middle;
}

.range {
  font-size: 26px;
  fill: #999;
}

/* RSI */
.rsi-head {
  height: 63px;
  margin: 0 12px;
  padding: 0 0 3px 3px;
  border-top: 2px solid #d8d8d8;
  display: flex;
  align-items: center;
  font-size: 31px;
  letter-spacing: 1.2px;
}

.picker {
  width: 133px;
  height: 46px;
  margin-right: 5px;
  padding: 0 8px 0 27px;
  display: flex;
  align-items: center;
  justify-content: space-between;
  background-color: #f6f7fa;
  border: 1px solid #dedfe4;
  border-radius: 8px;
  -webkit-text-stroke: 1px;
}

.rsi-head div:not(.picker) {
  width: 309px;
  display: flex;
  align-items: center;
  gap: 10px;
  stroke-width: 2;
  fill: none;
}

.r1 {
  stroke: #333;
}

.rsi-head .r2 {
  color: #ecc11e;
  stroke: #ecc11e;
}

.r3 {
  color: #cc22cc;
  stroke: #cc22cc;
}

.dates {
  height: 62px;
  margin: 0 12px;
  padding-left: 13px;
  display: grid;
  grid-template-columns: repeat(5, 211px);
  place-items: center;
  border-bottom: 2px solid #e3e3e3;
  font-size: 33px;
  color: #999;
}

/* banner */
.banner {
  height: 90px;
  margin: 17px 18px 17px;
  padding: 0 37px 0 30px;
  display: flex;
  align-items: center;
  border-radius: 45px;
  background-color: #fceee5;
  color: #e0590f;
}

.banner p {
  flex: 1;
  padding-left: 53px;
  font-size: 38.6px;
}

.sections {
  height: 105px;
  padding: 0 27px;
  display: grid;
  grid-template-columns: repeat(7, 1fr);
  place-items: center;
  border-top: 2px solid #d8d8d8;
  border-bottom: 2px solid #d8d8d8;
  font-size: 43px;
  color: #666;
}

/* cards */
.cards {
  height: 118px;
  padding: 12px 28px 0 36px;
  display: flex;
  gap: 18px;
  overflow: hidden;
}

.card {
  position: relative;
  width: 499px;
  height: 130px;
  padding: 30px 0 0 24px;
  display: flex;
  align-items: flex-start;
  overflow: hidden;
  border-radius: 22px 22px 0 0;
  background-color: #fef7f5;
}

.card-bg {
  position: absolute;
  left: 0;
  top: 0;
}

.card > svg:not(.card-bg),
.card h3 {
  position: relative;
}

.card h3 {
  margin: 4px 14px 0 14px;
  font-size: 41px;
  font-weight: 700;
}

.card h3 + svg {
  margin-top: 12px;
}

.no1 {
  font-size: 16px;
  font-weight: 700;
  fill: #dd5a52;
  text-anchor: middle;
}

.vs {
  font: italic 800 27px "Open Sans", sans-serif;
  letter-spacing: -1px;
  fill: #fff;
  text-anchor: middle;
}

.vs-bg {
  font: italic 800 136px "Open Sans", sans-serif;
  letter-spacing: -12px;
  fill: #fce6e4;
  stroke: #fef6f4;
  stroke-width: 44px;
  stroke-linejoin: round;
  paint-order: stroke;
}

/* bottom bar */
.bottom {
  height: 177px;
  display: grid;
  grid-template-columns: 275px repeat(4, 1fr);
  border-top: 2px solid #d8d8d8;
  background-color: #f7f8fa;
  color: #666;
  font-size: 35px;
}

.index {
  display: flex;
  flex-direction: column;
  align-items: center;
  color: #d82a2a;
}

.index .tri {
  border-width: 0 11px 7px;
  border-bottom: 7px solid #777;
  margin-top: 9px;
}

.points {
  margin-top: 16px;
  font-size: 34px;
}

.line {
  align-self: stretch;
  display: flex;
  justify-content: space-between;
  align-items: center;
  padding: 0 14px 0 42px;
  margin-top: 14px;
}

.line span {
  color: #666;
}

.line b {
  font-size: 33px;
}

.item {
  display: flex;
  flex-direction: column;
  align-items: center;
  padding-top: 8px;
}

.item span {
  margin-top: 19px;
}
```
